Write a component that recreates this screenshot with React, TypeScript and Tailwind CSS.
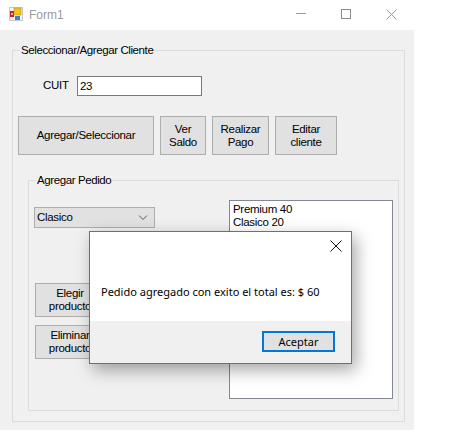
// App.tsx
import type { ReactNode } from 'react';

const FONT = "font-['Liberation_Sans',Arial,sans-serif]";

function WinButton({ className, children }: { className: string; children: ReactNode }) {
  return (
    <button className={`shrink-0 flex items-center justify-center text-center leading-[13px] tracking-[-0.3px] bg-[#e1e1e1] border border-[#adadad] text-black ${className}`}>
      {children}
    </button>
  );
}

function GroupBox({ title, className, children }: { title: string; className: string; children: ReactNode }) {
  return (
    <fieldset className={`border border-[#dcdcdc] ${className}`}>
      <legend className="ml-[2px] px-[1px] text-[11.5px] leading-[14px] tracking-[-0.4px] text-black">{title}</legend>
      {children}
    </fieldset>
  );
}

function AppIcon() {
  return (
    <svg width="14" height="14" viewBox="0 0 14 14" className="shrink-0 mb-[2px]">
      <rect x="0" y="0" width="14" height="14" fill="#c8c8c8" />
      <rect x="1" y="1" width="12" height="12" fill="#f4f4f4" />
      <rect x="1" y="4" width="4" height="6" fill="#c8201c" />
      <rect x="2" y="6" width="2" height="2" fill="#f0b0a0" />
      <rect x="5" y="1" width="7" height="7" fill="#f5c518" stroke="#b08a20" strokeWidth="0.6" />
      <rect x="6" y="9" width="5" height="4" fill="#3f7fd8" />
    </svg>
  );
}

export default function App() {
  return (
    <div className={`relative w-[457px] h-[432px] bg-white overflow-hidden ${FONT}`}>
      {/* title bar */}
      <div className="h-[30px] flex items-center pl-[9px]">
        <AppIcon />
        <span className="ml-[6px] text-[12px] text-[#9a9a9a]">Form1</span>
        <div className="ml-auto mb-[2px] flex items-center gap-[35px] pr-[60px]">
          <svg width="10" height="10" viewBox="0 0 10 10">
            <path d="M0 4.5H10" stroke="#999" fill="none" />
          </svg>
          <svg width="10" height="10" viewBox="0 0 10 10">
            <rect x="0.5" y="0.5" width="9" height="9" stroke="#8c8c8c" fill="none" />
          </svg>
          <svg width="11" height="11" viewBox="0 0 11 11">
            <path d="M0.5 0.5L10.5 10.5M10.5 0.5L0.5 10.5" stroke="#999" fill="none" />
          </svg>
        </div>
      </div>

      {/* form */}
      <div className="w-[414px] h-[400px] bg-[#f0f0f0] pl-3 pt-[13px]">
        <GroupBox title="Seleccionar/Agregar Cliente" className="w-[393px] h-[379px] pl-[5px] pr-1">
          <div className="flex items-center h-5 mt-[19px] pl-[25px] text-[11.5px]">
            <span className="w-[26px] tracking-[-0.3px]">CUIT</span>
            <input
              readOnly
              value="23"
              className="ml-[8px] w-[125px] h-5 bg-white border border-[#7a7a7a] px-[2px] text-[11.5px] tracking-[-0.3px] outline-none"
            />
          </div>
          <div className="flex gap-[6px] mt-5 text-[11.5px]">
            <WinButton className="w-[136px] h-[39px]">Agregar/Seleccionar</WinButton>
            <WinButton className="w-[46px] h-[39px]">Ver<br />Saldo</WinButton>
            <WinButton className="w-[57px] h-[39px]">Realizar<br />Pago</WinButton>
            <WinButton className="w-[62px] h-[39px]">Editar<br />cliente</WinButton>
          </div>

          <GroupBox title="Agregar Pedido" className="relative ml-[10px] mt-[18px] w-[371px] h-[238px] pl-[5px]">
            <div className="flex gap-[74px]">
              <div className="w-[121px] pt-5 text-[11.5px]">
                <div className="h-[21px] flex items-center justify-between pl-[2px] pr-[6px] bg-[#e1e1e1] border border-[#adadad] tracking-[-0.3px]">
                  <span>Clasico</span>
                  <svg width="10" height="6" viewBox="0 0 10 6">
                    <path d="M1 0.5L5 4.5L9 0.5" stroke="#555" fill="none" />
                  </svg>
                </div>
                <WinButton className="w-[70px] h-[34px] mt-[55px] ml-[1px]">Elegir<br />producto</WinButton>
                <WinButton className="w-[70px] h-[34px] mt-2 ml-[1px]">Eliminar<br />producto</WinButton>
              </div>
              <div className="w-[164px] h-[199px] mt-[13px] bg-white border border-[#828790] px-[3px] pt-[2px] text-[11.5px] tracking-[-0.3px] leading-[13px]">
                <div>Premium 40</div>
                <div>Clasico 20</div>
              </div>
            </div>
          </GroupBox>
        </GroupBox>
      </div>

      {/* message box */}
      <div className="absolute left-[89px] top-[231px] w-[263px] h-[133px] bg-white border border-[#6f6f6f] shadow-[4px_6px_16px_rgba(0,0,0,0.35)] flex flex-col">
        <div className="h-[89px] relative font-['Noto_Sans',sans-serif] text-[11px] text-black">
          <svg width="12" height="12" viewBox="0 0 12 12" className="absolute right-[9px] top-2">
            <path d="M0.5 0.5L11.5 11.5M11.5 0.5L0.5 11.5" stroke="#111" fill="none" />
          </svg>
          <div className="pl-[11px] pt-[52px] leading-[15px]">Pedido agregado con exito el total es: $ 60</div>
        </div>
        <div className="flex-1 bg-[#f0f0f0] flex justify-end items-start pr-4 pt-[10px]">
          <button className="w-[73px] h-[21px] bg-[#e1e1e1] border-2 border-[#0078d7] font-['Noto_Sans',sans-serif] text-[11px] leading-none text-black">
            Aceptar
          </button>
        </div>
      </div>
    </div>
  );
}
